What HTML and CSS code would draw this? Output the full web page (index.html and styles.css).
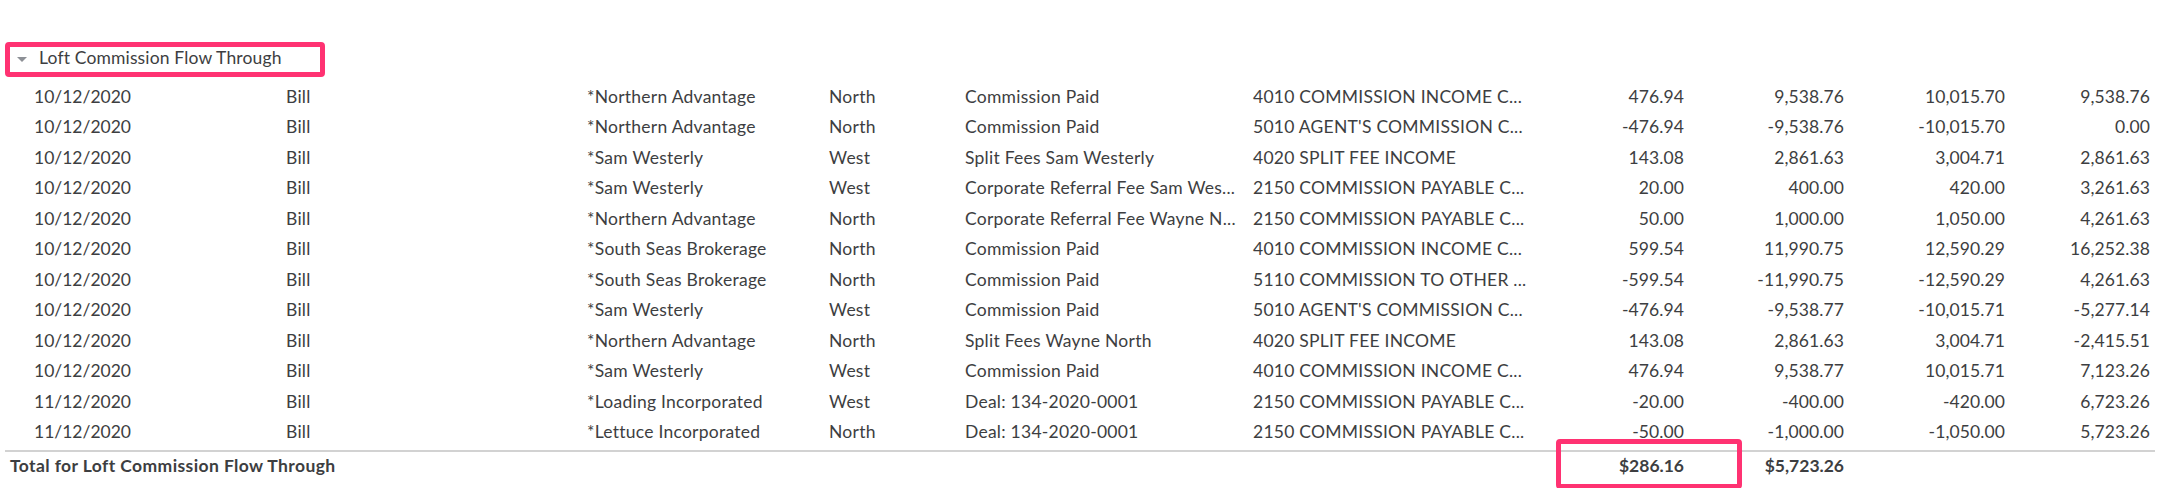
FILE: index.html
```html
<!DOCTYPE html>
<html lang="en">
<head>
  <meta charset="UTF-8" />
  <title>Loft Commission Flow Through</title>
  <link rel="stylesheet" href="styles.css">
</head>
<body>
  <div class="report">
    <div class="groupHead">
      <span class="caret"></span>
      <span class="groupName">Loft Commission Flow Through</span>
    </div>

    <div class="row"><span>10/12/2020</span><span>Bill</span><span>*Northern Advantage</span><span>North</span><span>Commission Paid</span><span>4010 COMMISSION INCOME C...</span><span class="num">476.94</span><span class="num">9,538.76</span><span class="num">10,015.70</span><span class="num">9,538.76</span></div>
    <div class="row"><span>10/12/2020</span><span>Bill</span><span>*Northern Advantage</span><span>North</span><span>Commission Paid</span><span>5010 AGENT'S COMMISSION C...</span><span class="num">-476.94</span><span class="num">-9,538.76</span><span class="num">-10,015.70</span><span class="num">0.00</span></div>
    <div class="row"><span>10/12/2020</span><span>Bill</span><span>*Sam Westerly</span><span>West</span><span>Split Fees Sam Westerly</span><span>4020 SPLIT FEE INCOME</span><span class="num">143.08</span><span class="num">2,861.63</span><span class="num">3,004.71</span><span class="num">2,861.63</span></div>
    <div class="row"><span>10/12/2020</span><span>Bill</span><span>*Sam Westerly</span><span>West</span><span>Corporate Referral Fee Sam Wes...</span><span>2150 COMMISSION PAYABLE C...</span><span class="num">20.00</span><span class="num">400.00</span><span class="num">420.00</span><span class="num">3,261.63</span></div>
    <div class="row"><span>10/12/2020</span><span>Bill</span><span>*Northern Advantage</span><span>North</span><span>Corporate Referral Fee Wayne N...</span><span>2150 COMMISSION PAYABLE C...</span><span class="num">50.00</span><span class="num">1,000.00</span><span class="num">1,050.00</span><span class="num">4,261.63</span></div>
    <div class="row"><span>10/12/2020</span><span>Bill</span><span>*South Seas Brokerage</span><span>North</span><span>Commission Paid</span><span>4010 COMMISSION INCOME C...</span><span class="num">599.54</span><span class="num">11,990.75</span><span class="num">12,590.29</span><span class="num">16,252.38</span></div>
    <div class="row"><span>10/12/2020</span><span>Bill</span><span>*South Seas Brokerage</span><span>North</span><span>Commission Paid</span><span>5110 COMMISSION TO OTHER ...</span><span class="num">-599.54</span><span class="num">-11,990.75</span><span class="num">-12,590.29</span><span class="num">4,261.63</span></div>
    <div class="row"><span>10/12/2020</span><span>Bill</span><span>*Sam Westerly</span><span>West</span><span>Commission Paid</span><span>5010 AGENT'S COMMISSION C...</span><span class="num">-476.94</span><span class="num">-9,538.77</span><span class="num">-10,015.71</span><span class="num">-5,277.14</span></div>
    <div class="row"><span>10/12/2020</span><span>Bill</span><span>*Northern Advantage</span><span>North</span><span>Split Fees Wayne North</span><span>4020 SPLIT FEE INCOME</span><span class="num">143.08</span><span class="num">2,861.63</span><span class="num">3,004.71</span><span class="num">-2,415.51</span></div>
    <div class="row"><span>10/12/2020</span><span>Bill</span><span>*Sam Westerly</span><span>West</span><span>Commission Paid</span><span>4010 COMMISSION INCOME C...</span><span class="num">476.94</span><span class="num">9,538.77</span><span class="num">10,015.71</span><span class="num">7,123.26</span></div>
    <div class="row"><span>11/12/2020</span><span>Bill</span><span>*Loading Incorporated</span><span>West</span><span>Deal: 134-2020-0001</span><span>2150 COMMISSION PAYABLE C...</span><span class="num">-20.00</span><span class="num">-400.00</span><span class="num">-420.00</span><span class="num">6,723.26</span></div>
    <div class="row"><span>11/12/2020</span><span>Bill</span><span>*Lettuce Incorporated</span><span>North</span><span>Deal: 134-2020-0001</span><span>2150 COMMISSION PAYABLE C...</span><span class="num">-50.00</span><span class="num">-1,000.00</span><span class="num">-1,050.00</span><span class="num">5,723.26</span></div>

    <div class="totalRow">
      <span class="totalLabel">Total for Loft Commission Flow Through</span>
      <span class="num hl">$286.16</span>
      <span class="num">$5,723.26</span>
      <span></span>
      <span></span>
    </div>
  </div>
</body>
</html>
```

FILE: styles.css
```css
body {
  margin: 0;
  background: #fff;
  font-family: Lato, 'Open Sans', sans-serif;
  font-size: 17.5px;
  line-height: 21px;
  color: #3d3e41;
}
.report {
  width: 2150px;
  margin-left: 5px;
  padding-top: 42px;
}
.groupHead {
  display: flex;
  align-items: center;
  box-sizing: border-box;
  width: 320px;
  height: 35px;
  padding: 1px 0 4px 7px;
  border: 5px solid #ff3272;
  border-radius: 4px;
  line-height: 20px;
}
.caret {
  width: 0;
  height: 0;
  border-left: 5px solid transparent;
  border-right: 5px solid transparent;
  border-top: 5px solid #8d9096;
  margin: 3px 12px 0 0;
}
.groupName {
  letter-spacing: 0.15px;
}
.row, .totalRow {
  display: grid;
  grid-template-columns: 252px 301px 242px 136px 288px 271px 160px 160px 161px 145px;
  align-items: center;
  padding: 0 5px 0 29px;
}
.row {
  height: 30.5px;
  letter-spacing: 0.25px;
}
.groupHead + .row {
  margin-top: 4px;
}
.row span {
  white-space: nowrap;
}
.row span:first-child {
  letter-spacing: 0;
}
.num {
  text-align: right;
}
.row .num {
  letter-spacing: 0.1px;
}
.totalRow {
  grid-template-columns: 1519px 160px 160px 161px 145px;
  height: 38px;
  box-sizing: border-box;
  padding: 3px 5px 0 0;
  margin-top: 3px;
  border-top: 2px solid #d2d2d2;
  align-items: start;
  font-weight: 700;
}
.totalLabel {
  padding-left: 5px;
  letter-spacing: 0.4px;
}
.hl {
  position: relative;
}
.hl::after {
  content: '';
  position: absolute;
  left: 32px;
  right: -58px;
  top: -16px;
  height: 50px;
  box-sizing: border-box;
  border: 5px solid #ff3272;
  border-radius: 4px;
}
```
